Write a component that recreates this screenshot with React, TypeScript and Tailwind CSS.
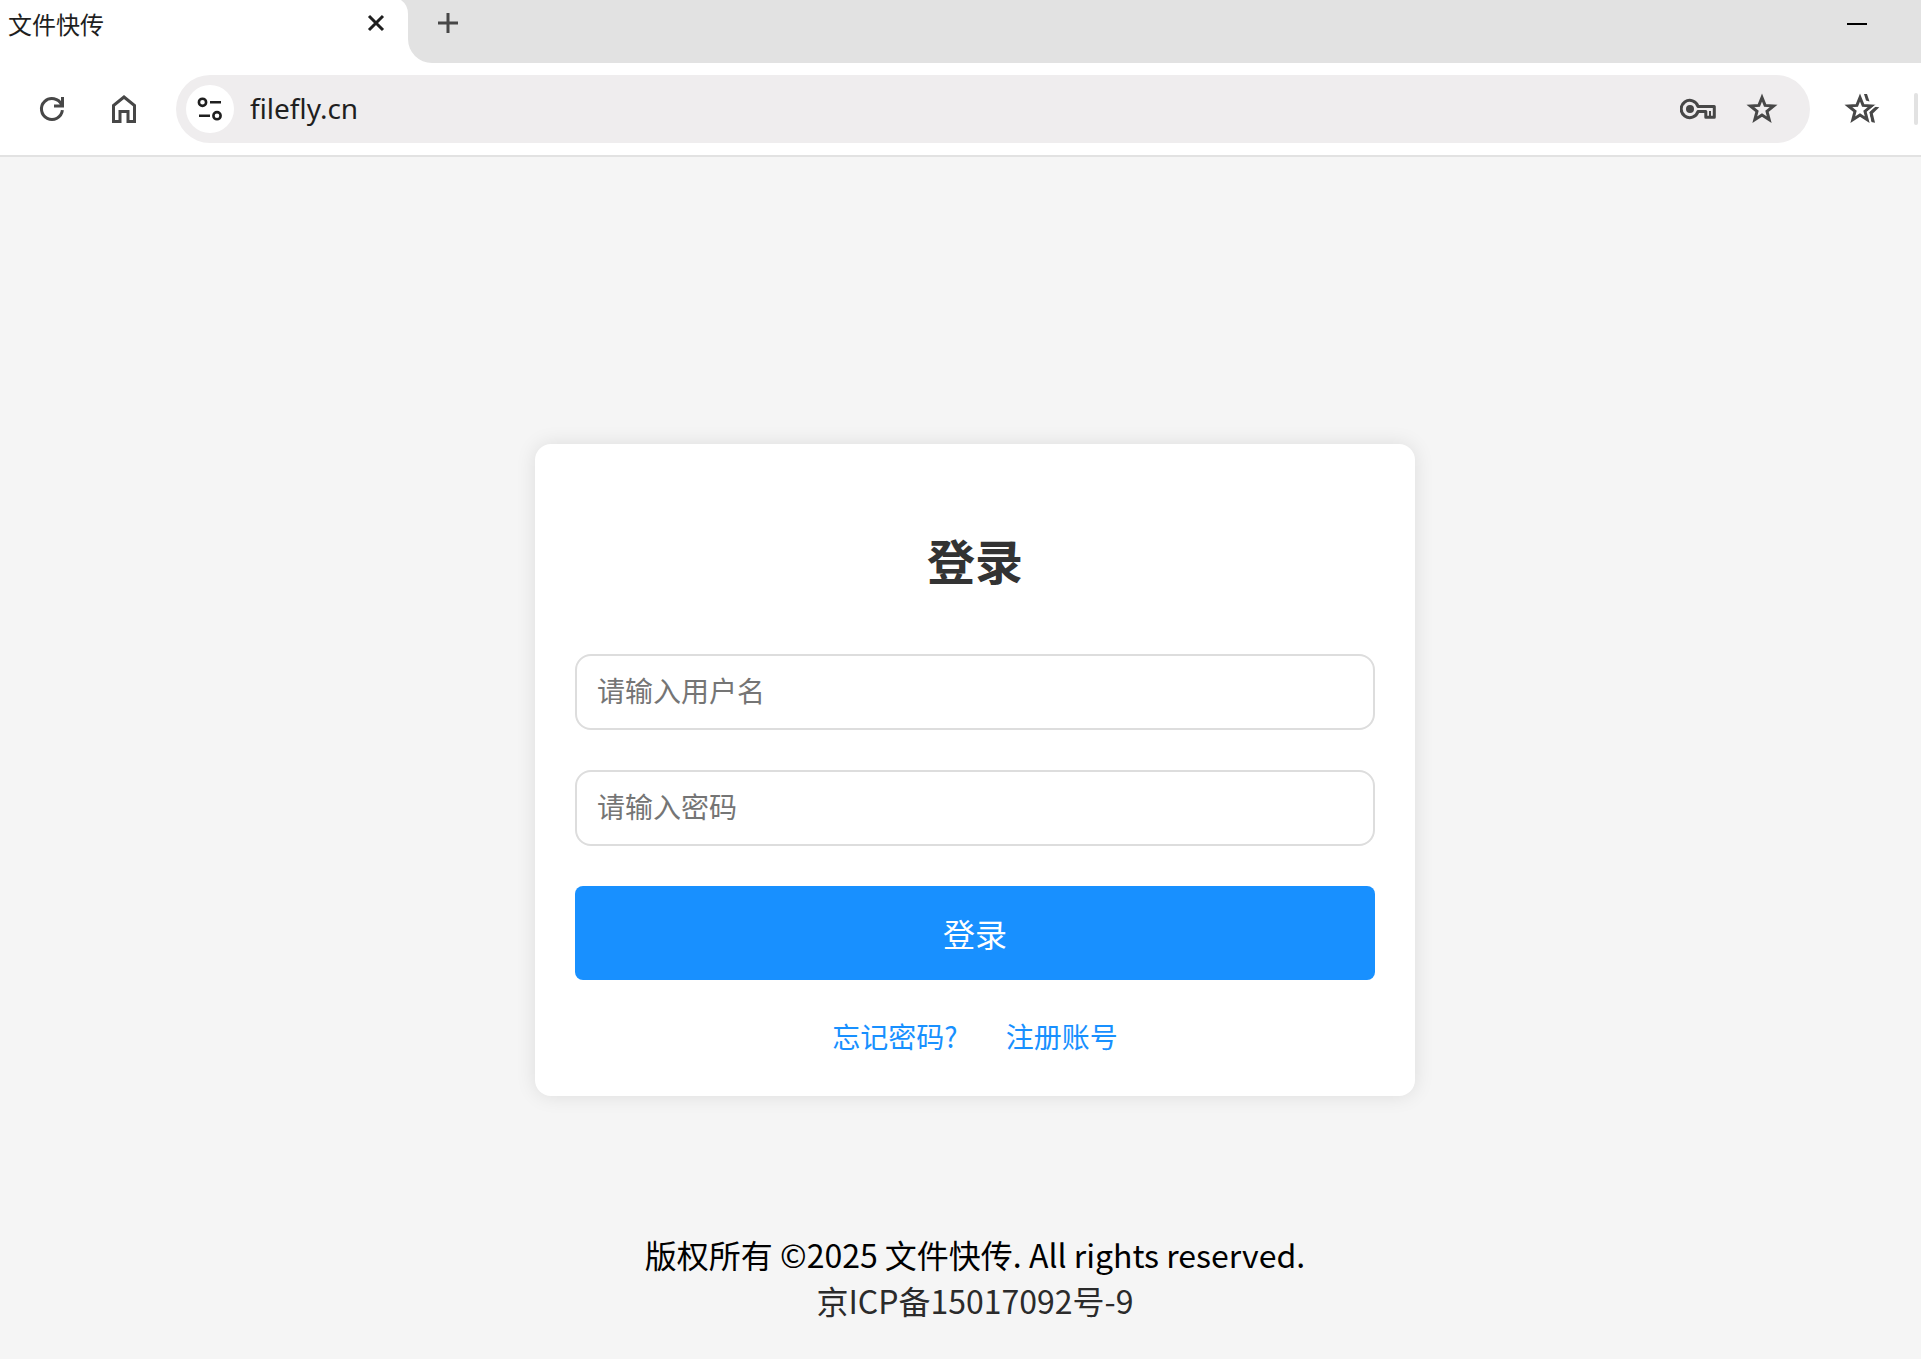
import type { ReactNode } from 'react';

const fields = [
  { id: 'username', type: 'text', label: '请输入用户名' },
  { id: 'password', type: 'password', label: '请输入密码' },
];

function IconButton({ label, className = '', children }: { label: string; className?: string; children: ReactNode }) {
  return (
    <button type="button" aria-label={label} className={`flex shrink-0 items-center justify-center ${className}`}>
      {children}
    </button>
  );
}

function TabStrip() {
  return (
    <div className="flex h-[63px] bg-white">
      <div className="relative flex w-[408px] shrink-0 items-start justify-between pl-2 pr-5">
        <span className="pt-1 text-2xl leading-10 text-[#1f1f1f]">文件快传</span>
        <IconButton label="关闭标签页" className="mt-[11px] size-6">
          <svg width="24" height="24" viewBox="0 0 24 24" fill="none" stroke="#1f1f1f" strokeWidth="3">
            <path d="M5 5 19 19M19 5 5 19" />
          </svg>
        </IconButton>
        <svg className="absolute top-0 right-0" width="8" height="14" viewBox="0 0 8 14" fill="#e2e2e2">
          <path d="M1 0Q8 5 8 14V0Z" />
        </svg>
      </div>
      <div className="flex flex-1 items-start justify-between rounded-bl-3xl bg-[#e2e2e2] pr-[52px] pl-7">
        <IconButton label="新建标签页" className="mt-[11px] size-6">
          <svg width="24" height="24" viewBox="0 0 24 24" fill="none" stroke="#474747" strokeWidth="3">
            <path d="M2 12H22M12 2V22" />
          </svg>
        </IconButton>
        <IconButton label="最小化" className="mt-3 size-6">
          <svg width="24" height="24" viewBox="0 0 24 24" fill="none" stroke="#000" strokeWidth="2">
            <path d="M2 12H22" />
          </svg>
        </IconButton>
      </div>
    </div>
  );
}

function Toolbar() {
  return (
    <div className="flex h-[94px] items-center border-b-2 border-[#e2e2e2] bg-white pr-[3px] pl-9">
      <IconButton label="重新加载" className="size-8">
        <svg width="32" height="32" viewBox="0 0 32 32" fill="none" stroke="#474747" strokeWidth="3">
          <path d="M26.4 17.2A10.5 10.5 0 1 1 25.6 11.8" />
          <path d="M18 13H26.5V4" />
        </svg>
      </IconButton>
      <IconButton label="主页" className="ml-10 size-8">
        <svg width="32" height="32" viewBox="0 0 32 32" fill="none" stroke="#474747" strokeWidth="3">
          <path d="M5.5 28.5V12.5L16 4 26.5 12.5V28.5H20V18.5H12V28.5Z" />
        </svg>
      </IconButton>
      <div className="ml-9 flex h-[68px] flex-1 items-center rounded-full bg-[#efedee] pr-8 pl-[10px]">
        <IconButton label="查看网站信息" className="size-12 rounded-full bg-white">
          <svg width="28" height="28" viewBox="0 0 28 28" fill="none" stroke="#1f1f1f" strokeWidth="2.6">
            <circle cx="6.5" cy="7.3" r="3.6" />
            <path d="M14 7.3H25M3 20.7H14" />
            <circle cx="21" cy="20.7" r="3.6" />
          </svg>
        </IconButton>
        <input
          type="text"
          aria-label="地址栏"
          defaultValue="filefly.cn"
          className="ml-4 min-w-0 flex-1 bg-transparent pb-0.5 font-['Noto_Sans','Noto_Sans_CJK_SC',sans-serif] text-[28px] leading-10 text-[#1f1f1f] outline-none"
        />
        <IconButton label="密码管理" className="h-8 w-9">
          <svg width="36" height="32" viewBox="0 0 36 32" fill="none" stroke="#474747" strokeWidth="3" strokeLinejoin="round">
            <circle cx="10" cy="16" r="4" fill="#474747" stroke="none" />
            <path d="M18 13.5H34.3V24.3H25.8V18.5H18A8.6 8.6 0 1 1 18 13.5Z" />
            <path d="M30 18V24" strokeWidth="2" />
          </svg>
        </IconButton>
        <IconButton label="添加书签" className="ml-[30px] size-8">
          <svg width="32" height="32" viewBox="0 0 32 32" fill="none" stroke="#474747" strokeWidth="3">
            <path d="M16 4.5 19.1 12.4 27.6 13 21 18.3 23.2 26.7 16 22.1 8.8 26.7 11 18.3 4.4 13 12.9 12.4Z" />
          </svg>
        </IconButton>
      </div>
      <IconButton label="收藏夹" className="ml-[34px] h-8 w-9">
        <svg width="36" height="32" viewBox="0 0 36 32" fill="none" stroke="#474747" strokeWidth="3">
          <path d="M16 4.5 19.1 12.4 27.6 13 21 18.3 23.2 26.7 16 22.1 8.8 26.7 11 18.3 4.4 13 12.9 12.4Z" />
          <path d="M20 1H23L25.5 8.5 22 7.5Z" fill="#474747" stroke="none" />
          <path d="M35.3 14.3 30.8 13.8 25.3 19.2 27.2 29 31 29.7 28.8 20.6Z" fill="#474747" stroke="none" />
          {/* keeps the second star apart from the first */}
          <path d="M31.6 12.6 24.1 18.7 27 30" stroke="#fff" strokeWidth="1.4" />
        </svg>
      </IconButton>
      <div className="ml-[34px] h-8 w-1 rounded-full bg-[#e2e2e2]" />
    </div>
  );
}

function LoginCard() {
  return (
    <form
      onSubmit={(e) => e.preventDefault()}
      className="w-full max-w-[880px] rounded-2xl bg-white p-10 shadow-[0_0_20px_rgba(0,0,0,0.1)]"
    >
      <h2 className="mt-10 mb-[60px] text-center text-5xl leading-[70px] font-bold text-[#333]">登录</h2>
      {fields.map((f) => (
        <input
          key={f.id}
          id={f.id}
          type={f.type}
          aria-label={f.label}
          placeholder={f.label}
          className="mb-10 block h-[76px] w-full rounded-2xl border-2 border-[#ddd] px-5 pb-1 text-[28px] text-[#333] outline-none placeholder:text-[#757575]"
        />
      ))}
      <button type="submit" className="block h-[94px] w-full rounded-lg bg-[#1890ff] text-[32px] text-white">
        登录
      </button>
      <div className="mt-9 flex justify-center gap-12 text-[28px] leading-10 text-[#1890ff]">
        <a href="#forgot">忘记密码?</a>
        <a href="#register">注册账号</a>
      </div>
    </form>
  );
}

export default function App() {
  return (
    <div className="flex min-h-screen flex-col bg-[#f5f5f5] font-['Noto_Sans_CJK_SC',sans-serif]">
      <header>
        <TabStrip />
        <Toolbar />
      </header>
      <main className="flex flex-1 flex-col items-center pt-[287px] pl-[29px]">
        <LoginCard />
        <footer className="mt-[135px] pb-9 text-center text-[32px] leading-[46px] text-black">
          <p>版权所有 ©2025 文件快传. All rights reserved.</p>
          <a href="#icp" className="text-[#2b2b2b]">
            京ICP备15017092号-9
          </a>
        </footer>
      </main>
    </div>
  );
}
